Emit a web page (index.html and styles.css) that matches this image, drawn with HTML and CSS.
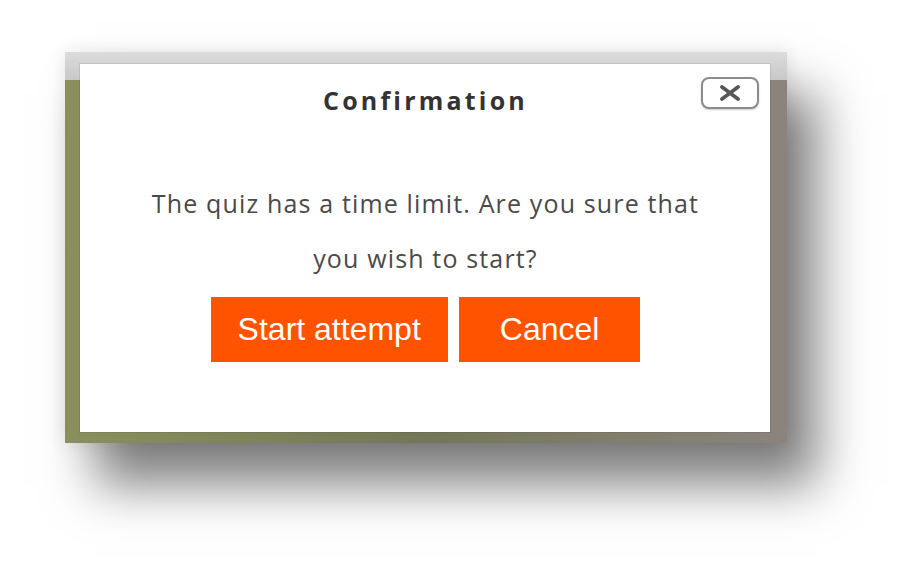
FILE: index.html
```html
<!DOCTYPE html>
<html lang="en">
<head>
  <meta charset="UTF-8">
  <meta name="viewport" content="width=device-width, initial-scale=1.0">
  <title>Confirmation</title>
  <link rel="stylesheet" href="styles.css">
</head>
<body>
  <div class="stage">
    <!-- Screenshot frame with the quiz dialog -->
    <div class="frame">
      <div class="dialog">
        <div class="dialog-header">
          <span></span>
          <h2 class="dialog-title">Confirmation</h2>
          <button class="close-btn" aria-label="Close">
            <svg width="22" height="16" viewBox="0 0 22 16">
              <path d="M3 2 L19 14 M19 2 L3 14" stroke="#575757" stroke-width="3.8" stroke-linecap="round" fill="none"/>
            </svg>
          </button>
        </div>

        <p class="dialog-message">The quiz has a time limit. Are you sure that you wish to start?</p>

        <div class="dialog-actions">
          <button class="btn">Start attempt</button>
          <button class="btn btn-cancel">Cancel</button>
        </div>
      </div>
    </div>
  </div>
</body>
</html>
```

FILE: styles.css
```css
/* General Styles */
* {
  margin: 0;
  padding: 0;
  box-sizing: border-box;
}

body {
  background: #fff;
  font-family: 'Open Sans', 'Noto Sans', sans-serif;
  color: #333;
}

.stage {
  padding: 52px 0 0 65px;
  height: 574px;
}

/* Frame around the dialog */
.frame {
  width: 722px;
  height: 391px;
  padding: 12px 17px 11px 15px;
  background:
    linear-gradient(to bottom, #dcdcdc 0, #c8c8c8 28px, transparent 28px),
    linear-gradient(to right, #8b8f5c 0%, #757658 50%, #8a847d 100%);
  box-shadow: 0 0 18px rgba(0, 0, 0, 0.1), 30px 42px 48px rgba(0, 0, 0, 0.5);
}

/* Dialog */
.dialog {
  height: 100%;
  background: #fff;
  padding: 13px 11px 0 12px;
  box-shadow: 0 0 0 1px rgba(0, 0, 0, 0.08);
}

.dialog-header {
  display: grid;
  grid-template-columns: 1fr auto 1fr;
  align-items: start;
  height: 40px;
}

.dialog-title {
  margin-top: 7px;
  font-size: 25px;
  line-height: 32px;
  font-weight: 700;
  letter-spacing: 3.2px;
  color: #333;
}

.close-btn {
  justify-self: end;
  width: 58px;
  height: 32px;
  display: flex;
  align-items: center;
  justify-content: center;
  background: #fff;
  border: 2px solid #8c8c8c;
  border-radius: 8px;
  box-shadow: 0 1px 2px rgba(0, 0, 0, 0.2);
  cursor: pointer;
}

.dialog-message {
  margin: 59px auto 0;
  max-width: 566px;
  font-size: 25px;
  line-height: 55px;
  letter-spacing: 1.15px;
  text-align: center;
  color: #4a4a4a;
}

/* Buttons */
.dialog-actions {
  display: flex;
  justify-content: center;
  gap: 11px;
  margin-top: 11px;
}

.btn {
  height: 65px;
  padding: 0 27px;
  background-color: #ff5300;
  color: #fff;
  border: none;
  font-family: 'Liberation Sans', Arial, sans-serif;
  font-size: 32px;
  cursor: pointer;
}

.btn-cancel {
  padding: 0 41px;
}
```
